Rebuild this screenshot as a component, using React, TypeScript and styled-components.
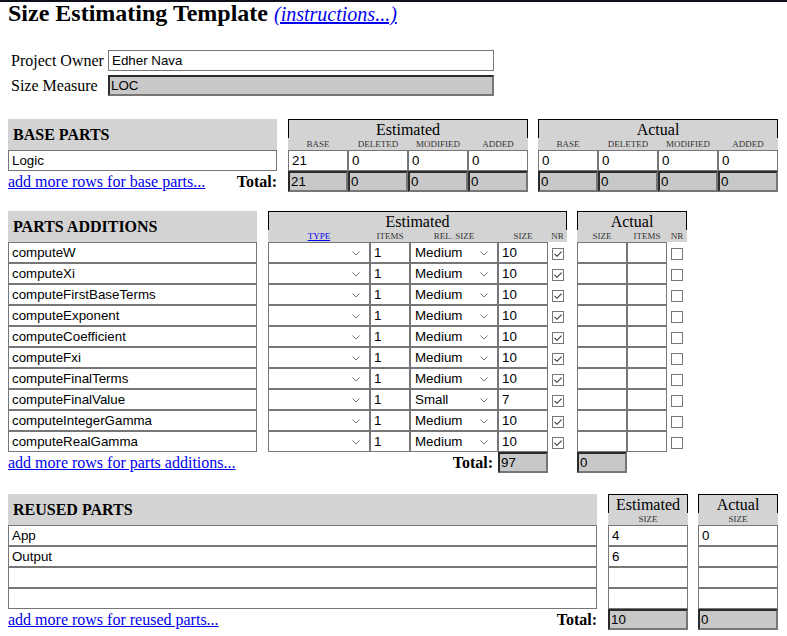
import React from "react";
import styled, { createGlobalStyle, css } from "styled-components";

const GlobalStyle = createGlobalStyle`
  html, body {
    margin: 0;
    padding: 0;
    background: #fff;
  }
  body {
    font-family: "Liberation Serif", "Times New Roman", serif;
    font-size: 16px;
    color: #000;
  }
`;

const Page = styled.div`
  box-sizing: border-box;
  width: 787px;
  border-top: 2px solid #10101a;
  padding: 0 8px 8px;
`;

const Title = styled.h1`
  margin: 0;
  height: 22px;
  font-size: 24px;
  line-height: 22px;
  font-weight: bold;
  white-space: nowrap;
`;

const TitleLink = styled.a`
  font-size: 20px;
  line-height: 22px;
  font-weight: normal;
  font-style: italic;
  color: #0000ee;
`;

const OwnerGrid = styled.div`
  display: grid;
  grid-template-columns: 97px 386px;
  grid-auto-rows: 21px;
  row-gap: 4px;
  align-items: center;
  margin: 26px 0 0 3px;
`;

const Label = styled.span`
  font-size: 16px;
  line-height: 21px;
  white-space: nowrap;
`;

const Field = styled.input<{ $ro?: boolean }>`
  box-sizing: border-box;
  display: block;
  width: 100%;
  height: 21px;
  margin: 0;
  padding: 0 3px;
  font: 13.33px "Liberation Sans", Arial, sans-serif;
  color: #000;
  background: #fff;
  border: 1px solid #767676;
  border-radius: 0;
  outline: none;
  ${(p) =>
    p.$ro &&
    css`
      padding: 0 1px;
      background: #c8c8c8;
      border-width: 2px;
      border-color: #2b2b2b #767676 #767676 #2b2b2b;
    `}
`;

const SelectWrap = styled.div`
  position: relative;
  height: 21px;
  svg {
    position: absolute;
    right: 10px;
    top: 9px;
    pointer-events: none;
  }
`;

const Dropdown = styled.select`
  box-sizing: border-box;
  display: block;
  width: 100%;
  height: 21px;
  margin: 0;
  padding: 0 0 0 4px;
  font: 13.33px "Liberation Sans", Arial, sans-serif;
  color: #000;
  background: #fff;
  border: 1px solid #767676;
  border-radius: 0;
  outline: none;
  appearance: none;
  -webkit-appearance: none;
`;

const Section = styled.div<{ $gap: number }>`
  display: flex;
  align-items: flex-start;
  margin-top: ${(p) => p.$gap}px;
`;

const NameColumn = styled.div<{ $width: number }>`
  width: ${(p) => p.$width}px;
  margin-right: 11px;
  display: flex;
  flex-direction: column;
`;

const SectionHeader = styled.div`
  box-sizing: border-box;
  height: 31px;
  display: flex;
  align-items: center;
  padding-left: 5px;
  background: #d3d3d3;
  font-weight: bold;
  font-size: 16px;
`;

const FooterRow = styled.div`
  height: 21px;
  display: flex;
  align-items: center;
  justify-content: space-between;
  white-space: nowrap;
`;

const MoreLink = styled.a`
  color: #0000ee;
  font-size: 16px;
`;

const TotalLabel = styled.b<{ $pad?: number }>`
  font-size: 16px;
  padding-right: ${(p) => p.$pad ?? 0}px;
`;

const Group = styled.div<{ $cols: string }>`
  display: grid;
  grid-template-columns: ${(p) => p.$cols};
  grid-template-rows: 19px 12px;
  grid-auto-rows: 21px;
  & + & {
    margin-left: 10px;
  }
`;

const GroupTitle = styled.div`
  grid-column: 1 / -1;
  box-sizing: border-box;
  background: #d3d3d3;
  border: 1px solid #000;
  border-bottom: none;
  text-align: center;
  font-size: 16px;
  line-height: 19px;
`;

const SubHead = styled.div`
  background: #d3d3d3;
  text-align: center;
  font-size: 9px;
  line-height: 13px;
  text-transform: uppercase;
  white-space: nowrap;
  color: #333;
  a {
    color: #0000ee;
  }
`;

const Cell = styled.div<{ $span?: number; $right?: boolean }>`
  grid-column: span ${(p) => p.$span ?? 1};
  display: flex;
  align-items: center;
  justify-content: ${(p) => (p.$right ? "flex-end" : "stretch")};
  & > * {
    flex: 1;
  }
`;

const BoxCell = styled.div`
  display: flex;
  justify-content: center;
  padding-top: 6px;
`;

const CheckBox = styled.span`
  box-sizing: border-box;
  width: 12px;
  height: 12px;
  border: 1px solid #767676;
  background: #fff;
  display: inline-flex;
  align-items: center;
  justify-content: center;
`;

function Check({ checked }: { checked: boolean }) {
  return (
    <CheckBox>
      {checked && (
        <svg width="10" height="10" viewBox="0 0 10 10">
          <polyline
            points="1.5,4.8 4,7.3 8.6,2.6"
            fill="none"
            stroke="#333"
            strokeWidth="1.1"
          />
        </svg>
      )}
    </CheckBox>
  );
}

function Select({ value, options }: { value: string; options: string[] }) {
  return (
    <SelectWrap>
      <Dropdown defaultValue={value}>
        {options.map((o) => (
          <option key={o} value={o}>
            {o}
          </option>
        ))}
      </Dropdown>
      <svg width="8" height="5" viewBox="0 0 8 5">
        <polyline points="0.5,0.5 4,4 7.5,0.5" fill="none" stroke="#777" strokeWidth="1" />
      </svg>
    </SelectWrap>
  );
}

const relSizes = ["Very Small", "Small", "Medium", "Large", "Very Large"];
const partTypes = ["", "Calculation", "Data", "I/O", "Logic", "Set-up", "Text"];

const additions = [
  { name: "computeW", rel: "Medium", size: 10 },
  { name: "computeXi", rel: "Medium", size: 10 },
  { name: "computeFirstBaseTerms", rel: "Medium", size: 10 },
  { name: "computeExponent", rel: "Medium", size: 10 },
  { name: "computeCoefficient", rel: "Medium", size: 10 },
  { name: "computeFxi", rel: "Medium", size: 10 },
  { name: "computeFinalTerms", rel: "Medium", size: 10 },
  { name: "computeFinalValue", rel: "Small", size: 7 },
  { name: "computeIntegerGamma", rel: "Medium", size: 10 },
  { name: "computeRealGamma", rel: "Medium", size: 10 },
];

const reused = [
  { name: "App", est: "4", act: "0" },
  { name: "Output", est: "6", act: "" },
  { name: "", est: "", act: "" },
  { name: "", est: "", act: "" },
];

const baseCols = ["base", "deleted", "modified", "added"];

function App() {
  return (
    <Page>
      <GlobalStyle />
      <Title>
        Size Estimating Template <TitleLink href="#">(instructions...)</TitleLink>
      </Title>

      <OwnerGrid>
        <Label>Project Owner</Label>
        <Field defaultValue="Edher Nava" />
        <Label>Size Measure</Label>
        <Field $ro readOnly defaultValue="LOC" />
      </OwnerGrid>

      {/* base parts */}
      <Section $gap={23}>
        <NameColumn $width={269}>
          <SectionHeader>BASE PARTS</SectionHeader>
          <Field defaultValue="Logic" />
          <FooterRow>
            <MoreLink href="#">add more rows for base parts...</MoreLink>
            <TotalLabel>Total:</TotalLabel>
          </FooterRow>
        </NameColumn>
        {[
          { title: "Estimated", values: ["21", "0", "0", "0"], totals: ["21", "0", "0", "0"] },
          { title: "Actual", values: ["0", "0", "0", "0"], totals: ["0", "0", "0", "0"] },
        ].map((g) => (
          <Group key={g.title} $cols="repeat(4, 60px)">
            <GroupTitle>{g.title}</GroupTitle>
            {baseCols.map((c) => (
              <SubHead key={c}>{c}</SubHead>
            ))}
            {g.values.map((v, i) => (
              <Cell key={"v" + i}>
                <Field defaultValue={v} />
              </Cell>
            ))}
            {g.totals.map((v, i) => (
              <Cell key={"t" + i}>
                <Field $ro readOnly defaultValue={v} />
              </Cell>
            ))}
          </Group>
        ))}
      </Section>

      {/* parts additions */}
      <Section $gap={19}>
        <NameColumn $width={249}>
          <SectionHeader>PARTS ADDITIONS</SectionHeader>
          {additions.map((a) => (
            <Field key={a.name} defaultValue={a.name} />
          ))}
          <FooterRow>
            <MoreLink href="#">add more rows for parts additions...</MoreLink>
          </FooterRow>
        </NameColumn>
        <Group $cols="102px 40px 88px 50px 19px">
          <GroupTitle>Estimated</GroupTitle>
          <SubHead>
            <a href="#">type</a>
          </SubHead>
          <SubHead>items</SubHead>
          <SubHead>rel. size</SubHead>
          <SubHead>size</SubHead>
          <SubHead>nr</SubHead>
          {additions.map((a) => (
            <React.Fragment key={a.name}>
              <Cell>
                <Select value="" options={partTypes} />
              </Cell>
              <Cell>
                <Field defaultValue="1" />
              </Cell>
              <Cell>
                <Select value={a.rel} options={relSizes} />
              </Cell>
              <Cell>
                <Field defaultValue={String(a.size)} />
              </Cell>
              <BoxCell>
                <Check checked />
              </BoxCell>
            </React.Fragment>
          ))}
          <Cell $span={3} $right>
            <TotalLabel $pad={5} style={{ flex: "none" }}>
              Total:
            </TotalLabel>
          </Cell>
          <Cell>
            <Field $ro readOnly defaultValue="97" />
          </Cell>
        </Group>
        <Group $cols="50px 40px 20px">
          <GroupTitle>Actual</GroupTitle>
          <SubHead>size</SubHead>
          <SubHead>items</SubHead>
          <SubHead>nr</SubHead>
          {additions.map((a) => (
            <React.Fragment key={a.name}>
              <Cell>
                <Field defaultValue="" />
              </Cell>
              <Cell>
                <Field defaultValue="" />
              </Cell>
              <BoxCell>
                <Check checked={false} />
              </BoxCell>
            </React.Fragment>
          ))}
          <Cell>
            <Field $ro readOnly defaultValue="0" />
          </Cell>
        </Group>
      </Section>

      {/* reused parts */}
      <Section $gap={21}>
        <NameColumn $width={589}>
          <SectionHeader>REUSED PARTS</SectionHeader>
          {reused.map((r, i) => (
            <Field key={i} defaultValue={r.name} />
          ))}
          <FooterRow>
            <MoreLink href="#">add more rows for reused parts...</MoreLink>
            <TotalLabel>Total:</TotalLabel>
          </FooterRow>
        </NameColumn>
        <Group $cols="80px">
          <GroupTitle>Estimated</GroupTitle>
          <SubHead>size</SubHead>
          {reused.map((r, i) => (
            <Cell key={i}>
              <Field defaultValue={r.est} />
            </Cell>
          ))}
          <Cell>
            <Field $ro readOnly defaultValue="10" />
          </Cell>
        </Group>
        <Group $cols="80px">
          <GroupTitle>Actual</GroupTitle>
          <SubHead>size</SubHead>
          {reused.map((r, i) => (
            <Cell key={i}>
              <Field defaultValue={r.act} />
            </Cell>
          ))}
          <Cell>
            <Field $ro readOnly defaultValue="0" />
          </Cell>
        </Group>
      </Section>
    </Page>
  );
}

export default App;
